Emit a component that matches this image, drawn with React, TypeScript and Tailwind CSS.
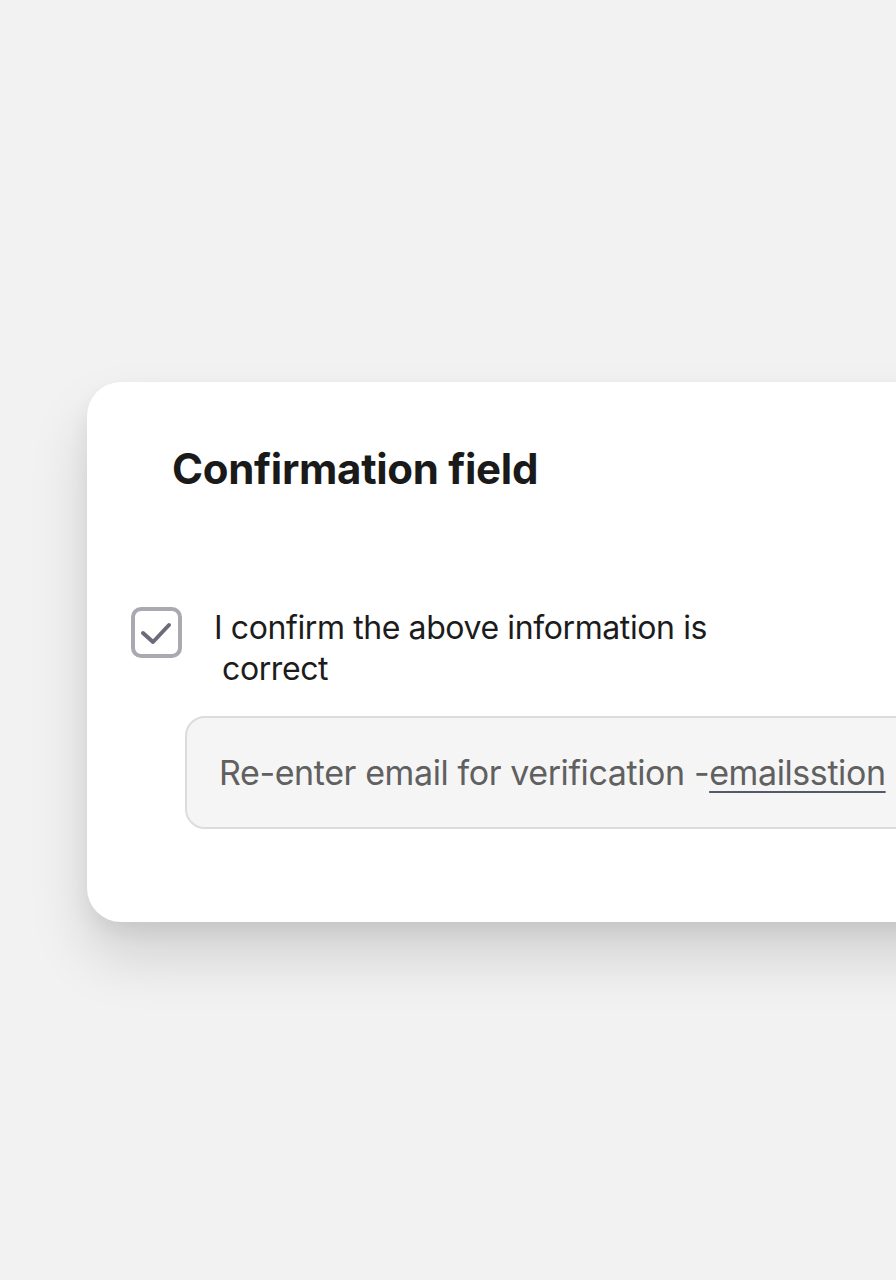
import React from 'react';

const CheckIcon: React.FC = () => (
  <svg viewBox="0 0 43 43" className="w-[43px] h-[43px]" fill="none">
    <path d="M8 22L18 31L34 14" stroke="#6b6b7a" strokeWidth="4" strokeLinecap="round" strokeLinejoin="round" />
  </svg>
);

const App: React.FC = () => {
  return (
    <div className="w-[896px] h-[1280px] overflow-hidden bg-[#f2f2f2] pt-[382px] pl-[87px] font-['Inter',sans-serif]">
      <div className="w-[900px] h-[540px] bg-white rounded-[34px] shadow-[0_34px_60px_rgba(0,0,0,0.14),0_10px_20px_rgba(0,0,0,0.06)] pt-[61px] pl-[44px]">
        <h1 className="pl-[41px] text-[42px] leading-[52px] font-bold text-[#1a1a1a] tracking-[-0.3px]">
          Confirmation field
        </h1>

        <div className="mt-[110px] flex items-start gap-[32px]">
          <div className="mt-[2px] w-[51px] h-[51px] shrink-0 rounded-[10px] border-[4px] border-[#a9a9b1] flex items-center justify-center">
            <CheckIcon />
          </div>
          <div className="mt-[2px] text-[32px] leading-[41px] text-[#1c1c1c] tracking-[-0.4px]">
            <span className="block">I confirm the above information is</span>
            <span className="block pl-[8px]">correct</span>
          </div>
        </div>

        <div className="mt-[27px] ml-[54px] h-[113px] rounded-[20px] border-2 border-[#dcdcdc] bg-[#f5f5f5] flex items-center pl-[32px]">
          <span className="text-[34px] text-[#606060] tracking-[-0.4px] whitespace-nowrap">
            Re-enter email for verification -
            <span className="underline decoration-[#555a6a] decoration-2 underline-offset-[6px]">emailsstion</span>
          </span>
        </div>
      </div>
    </div>
  );
};

export default App;
